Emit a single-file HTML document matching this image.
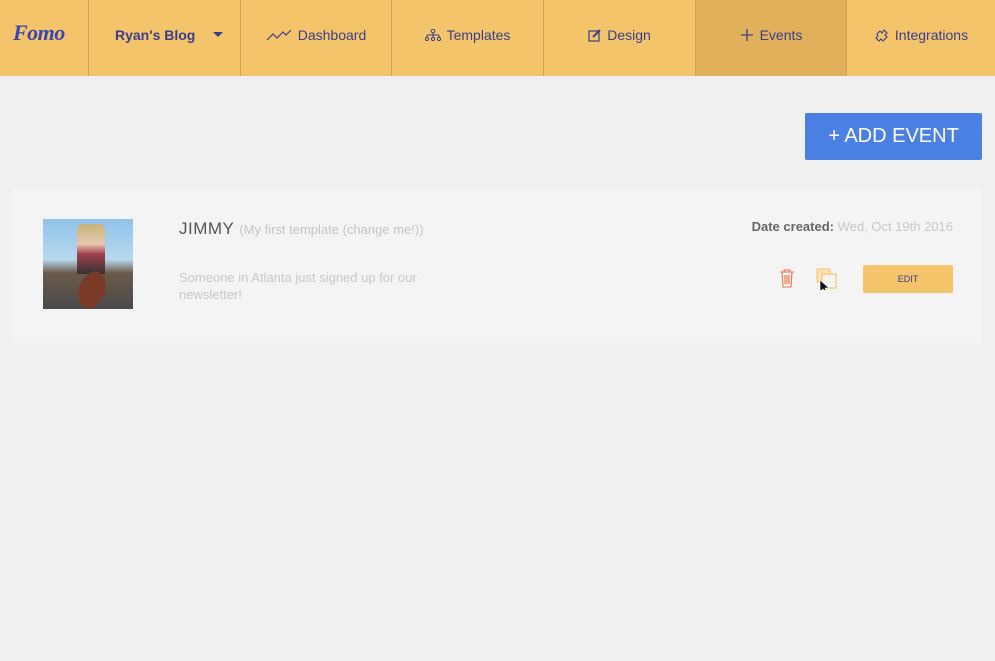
<!DOCTYPE html>
<html><head><meta charset="utf-8"><style>
*{margin:0;padding:0;box-sizing:border-box}
body{width:995px;height:661px;background:#f0f0f0;font-family:"Liberation Sans",sans-serif;position:relative;overflow:hidden}
.nav{position:absolute;left:0;top:0;width:995px;height:76px;background:#f4c46a}
.it{position:absolute;top:0;height:70px;border-left:1px solid #c9a060;display:flex;align-items:center;justify-content:center;color:#3a3e8c;font-size:14px}
.it{height:76px;padding-bottom:6px}
.it svg{margin-right:6px}
.logo{position:absolute;left:13px;top:20px;font-family:"Liberation Serif",serif;font-style:italic;font-weight:bold;font-size:22px;color:#3a46b0;letter-spacing:-.5px}
.btn{position:absolute;left:805px;top:113px;width:177px;height:47px;background:#4a80e3;color:#fff;font-size:20px;display:flex;align-items:center;justify-content:center;border-radius:2px}
.card{position:absolute;left:13px;top:190px;width:969px;height:153px;background:#f4f4f4}
</style></head><body>
<div class="nav">
<div class="logo">Fomo</div>
<div class="it" style="left:88px;width:152px;font-weight:bold;justify-content:flex-start;padding-left:26px">Ryan's Blog<span style="position:absolute;right:17px;top:32px;border-left:5px solid transparent;border-right:5px solid transparent;border-top:5px solid #3a3e8c"></span></div>
<div class="it" style="left:240px;width:151px"><svg width="26" height="12"><path d="M1 11 L7 5 L11 9 L17 3 L20 6 L25 1" fill="none" stroke="#3a3e8c" stroke-width="1.2"/></svg>Dashboard</div>
<div class="it" style="left:391px;width:152px"><svg width="16" height="12"><circle cx="8" cy="2" r="1.8" fill="none" stroke="#3a3e8c"/><path d="M8 4V6M2 6H14M2 6V8M8 6V8M14 6V8" stroke="#3a3e8c" fill="none"/><circle cx="2" cy="10" r="1.6" fill="none" stroke="#3a3e8c"/><circle cx="8" cy="10" r="1.6" fill="none" stroke="#3a3e8c"/><circle cx="14" cy="10" r="1.6" fill="none" stroke="#3a3e8c"/></svg>Templates</div>
<div class="it" style="left:543px;width:152px"><svg width="13" height="13"><rect x="1" y="2" width="10" height="10" fill="none" stroke="#3a3e8c" stroke-width="1.2"/><path d="M5 8L12 1" stroke="#3a3e8c" stroke-width="2"/></svg>Design</div>
<div class="it" style="left:695px;width:151px;background:#e0b05a"><svg width="14" height="14"><path d="M7 1V13M1 7H13" stroke="#3a3e8c" stroke-width="1.3"/></svg>Events</div>
<div class="it" style="left:846px;width:149px"><svg width="15" height="15"><path d="M3 6 L6 3 L8 5 L10 2 L13 5 L11 7 L13 9 L9 13 L7 11 L5 13 L2 10 L4 8 Z" fill="none" stroke="#3a3e8c" stroke-width="1.1"/></svg>Integrations</div>
</div>
<div class="btn">+ ADD EVENT</div>
<div class="card">
<div style="position:absolute;left:30px;top:29px;width:90px;height:90px;background:linear-gradient(#8fc3ea 0%,#b9d8ee 45%,#6b5a4a 60%,#4a4a4a 100%);overflow:hidden">
<div style="position:absolute;left:34px;top:5px;width:28px;height:50px;background:linear-gradient(#c9b27a,#e6c8b0 40%,#a34050 60%,#333 100%);border-radius:6px 6px 0 0"></div>
<div style="position:absolute;left:36px;top:52px;width:26px;height:38px;background:#7a3a28;border-radius:50%;transform:rotate(20deg)"></div>
</div>
<div style="position:absolute;left:166px;top:29px;font-size:17px;color:#555;letter-spacing:.5px">JIMMY <span style="font-size:13px;color:#c4c4c4;letter-spacing:0">(My first template (change me!))</span></div>
<div style="position:absolute;left:166px;top:79px;width:290px;font-size:13px;line-height:17px;color:#c8c8c8">Someone in Atlanta just signed up for our newsletter!</div>
<div style="position:absolute;right:29px;top:29px;font-size:13px;color:#777"><b style="color:#666">Date created:</b> <span style="color:#c8c8c8">Wed, Oct 19th 2016</span></div>
<svg style="position:absolute;left:766px;top:78px" width="16" height="20"><path d="M1 4H15M5 4V2H11V4M3 4L4 19H12L13 4M6 7V16M8 7V16M10 7V16" fill="none" stroke="#e8734a" stroke-width="1.1"/></svg>
<svg style="position:absolute;left:803px;top:78px" width="22" height="22"><rect x="1" y="1" width="13" height="13" fill="#fbe2b0" stroke="#f4c46a"/><rect x="6" y="6" width="14" height="14" fill="#f4f4f4" stroke="#f4c46a" stroke-width="1.2"/><path d="M4 12L4 24L7 21L10 26L11 25L9 20L13 20Z" fill="#111" stroke="#fff" stroke-width=".6"/></svg>
<div style="position:absolute;left:850px;top:75px;width:90px;height:28px;background:#f4c46a;border-radius:2px;color:#3a3e8c;font-size:9px;display:flex;align-items:center;justify-content:center">EDIT</div>
</div>
</body></html>
